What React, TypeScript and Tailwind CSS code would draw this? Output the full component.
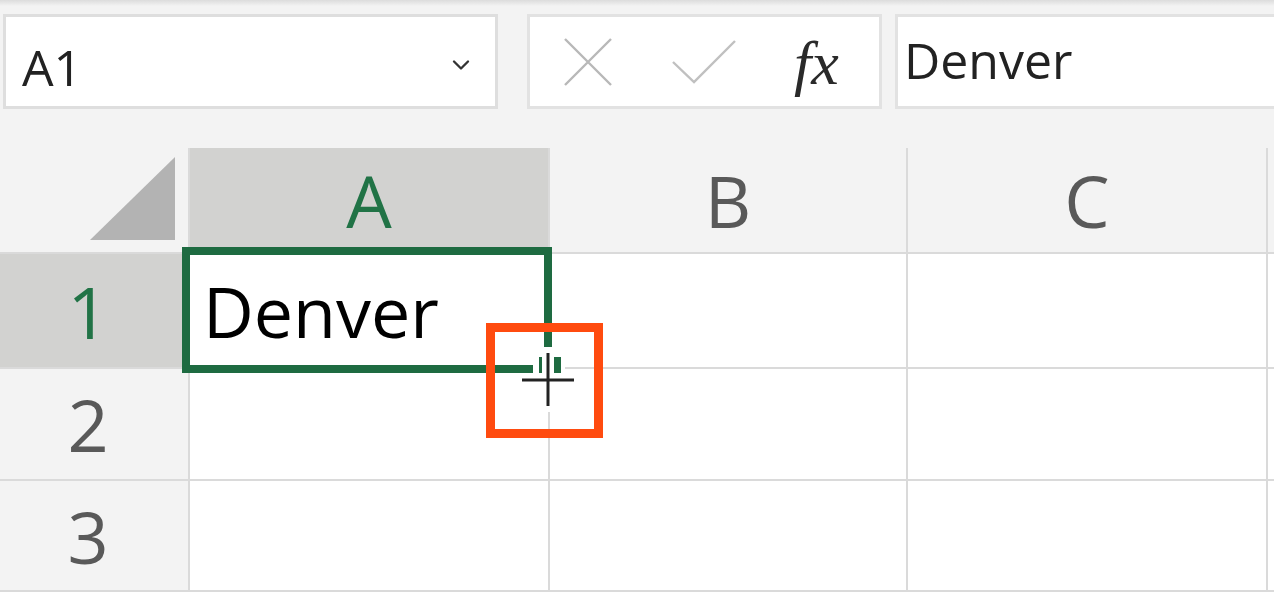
import { ChevronDown } from 'lucide-react';

function Corner() {
  return (
    <div className="flex items-end justify-end border-r-2 border-b-2 border-[#dadada] bg-[#f3f3f3] pr-[13px] pb-[12px]">
      <svg width="85" height="83" viewBox="0 0 85 83">
        <polygon points="0,83 85,83 85,0" fill="#b3b3b3" />
      </svg>
    </div>
  );
}

function ColHeader({ label, active }: { label: string; active?: boolean }) {
  return (
    <div
      className={
        active
          ? 'flex items-center justify-center border-r-2 border-b-2 border-[#dadada] bg-[#d2d2d0] text-[72px] leading-none text-[#217346]'
          : 'flex items-center justify-center border-r-2 border-b-2 border-[#dadada] bg-[#f3f3f3] text-[72px] leading-none text-[#595959]'
      }
    >
      {label}
    </div>
  );
}

function RowHeader({ label, active }: { label: string; active?: boolean }) {
  return (
    <div
      className={
        active
          ? 'flex items-center justify-center border-r-2 border-b-2 border-[#dadada] bg-[#d2d2d0] pr-[12px] text-[72px] leading-none text-[#217346]'
          : 'flex items-center justify-center border-r-2 border-b-2 border-[#dadada] bg-[#f3f3f3] pr-[12px] text-[72px] leading-none text-[#595959]'
      }
    >
      {label}
    </div>
  );
}

function Cell({ children }: { children?: React.ReactNode }) {
  return (
    <div className="flex items-center border-r-2 border-b-2 border-[#dadada] bg-white pl-[13px] text-[70px] leading-none text-black">
      {children}
    </div>
  );
}

export default function App() {
  return (
    <div className="relative h-[592px] w-[1274px] overflow-hidden bg-[#f3f3f3] font-['Open_Sans',sans-serif]">
      <div className="h-[6px] bg-gradient-to-b from-[#dcdcdc] to-[#f3f3f3]" />

      {/* formula bar */}
      <div className="flex h-[142px] items-start pt-[8px] pl-[3px]">
        <div className="flex h-[95px] w-[495px] shrink-0 items-center justify-between border-[3px] border-[#dedede] bg-white pt-[10px] pl-[16px] pr-[20px]">
          <span className="text-[50px] leading-none text-[#222]">A1</span>
          <ChevronDown className="-mt-[4px] h-[28px] w-[28px] text-[#333]" strokeWidth={2} />
        </div>

        <div className="ml-[29px] flex h-[95px] w-[355px] shrink-0 items-center border-[3px] border-[#e2e2e2] bg-white">
          <svg className="ml-[34px]" width="48" height="48" viewBox="0 0 48 48">
            <path d="M1 1 L47 47 M47 1 L1 47" stroke="#b8b8b8" strokeWidth="2.4" fill="none" />
          </svg>
          <svg className="ml-[60px]" width="64" height="44" viewBox="0 0 64 44">
            <path d="M1 22 L22 42 L63 1" stroke="#c0c0c0" strokeWidth="2.4" fill="none" />
          </svg>
          <span className="ml-[58px] mt-[2px] font-['Liberation_Serif',serif] text-[62px] italic leading-none text-[#2a2a2a]">
            fx
          </span>
        </div>

        <div className="ml-[13px] flex h-[95px] w-[420px] shrink-0 items-center border-[3px] border-[#e2e2e2] bg-white pb-[4px] pl-[6px]">
          <span className="text-[50px] leading-none text-[#222]">Denver</span>
        </div>
      </div>

      {/* grid */}
      <div className="grid grid-cols-[190px_360px_358px_360px_1fr] grid-rows-[106px_115px_112px_111px]">
        <Corner />
        <ColHeader label="A" active />
        <ColHeader label="B" />
        <ColHeader label="C" />
        <div className="border-b-2 border-[#dadada] bg-[#f3f3f3]" />

        <RowHeader label="1" active />
        <Cell>Denver</Cell>
        <Cell />
        <Cell />
        <Cell />

        <RowHeader label="2" />
        <Cell />
        <Cell />
        <Cell />
        <Cell />

        <RowHeader label="3" />
        <Cell />
        <Cell />
        <Cell />
        <Cell />
      </div>

      {/* selection border */}
      <div className="absolute top-[247px] left-[182px] h-[126px] w-[370px] border-[8px] border-[#1e6b41]" />

      {/* fill handle + crosshair cursor */}
      <svg className="absolute top-[340px] left-[515px]" width="70" height="75" viewBox="0 0 70 75">
        <rect x="18" y="10" width="32" height="26" fill="#fff" />
        <rect x="24" y="17" width="22" height="16" fill="#1e6b41" />
        <path d="M33 13 L33 66 M7 40 L59 40" stroke="#fff" strokeWidth="12" strokeLinecap="square" fill="none" />
        <path d="M33 13 L33 66 M7 40 L59 40" stroke="#222" strokeWidth="3" fill="none" />
      </svg>

      {/* highlight box */}
      <div className="absolute top-[323px] left-[486px] h-[115px] w-[117px] border-[9px] border-[#ff4b0f]" />
    </div>
  );
}
